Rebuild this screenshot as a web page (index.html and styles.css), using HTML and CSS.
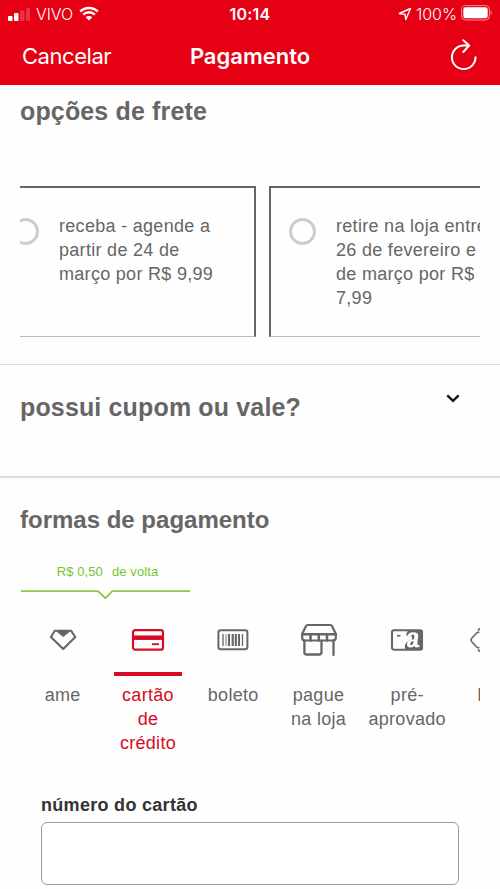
FILE: index.html
```html
<!DOCTYPE html>
<html lang="pt-BR">
<head>
<meta charset="utf-8">
<title>Pagamento</title>
<link rel="stylesheet" href="styles.css">
</head>
<body>
<header class="header">
  <div class="status">
    <div class="status-left">
      <svg class="signal" width="22" height="13" viewBox="0 0 22 13" fill="#fff"><rect x="0" y="8" width="4.500" height="5" rx="1"/><rect x="6" y="5" width="4.500" height="8" rx="1"/><rect x="12" y="2.500" width="4.500" height="10.500" rx="1" opacity=".2"/><rect x="18" y="0" width="4" height="13" rx="1" opacity=".2"/></svg>
      <span class="carrier">VIVO</span>
      <svg class="wifi" width="20" height="15" viewBox="0 0 20 15" fill="none" stroke="#fff" stroke-width="2.500"><path d="M1.200 5.500A12.600 12.600 0 0 1 18.800 5.500M4.200 8.700A8.300 8.300 0 0 1 15.800 8.700"/><path d="M10 14.500 6.700 11.300A4.700 4.700 0 0 1 13.300 11.300Z" fill="#fff" stroke="none"/></svg>
    </div>
    <span class="time">10:14</span>
    <div class="status-right">
      <svg width="14" height="14" viewBox="0 0 14 14" fill="none" stroke="#fff" stroke-width="1.400" stroke-linejoin="round"><path d="M1.300 6.500 12.500 1.500 7.800 12.500 7 7.200Z"/></svg>
      <span class="percent">100%</span>
      <svg class="battery" width="31" height="16" viewBox="0 0 31 16"><rect x=".6" y=".6" width="27.800" height="14.400" rx="4" fill="none" stroke="#fff" stroke-opacity=".55"/><rect x="2.300" y="2.300" width="24.400" height="11" rx="2.300" fill="#fff"/><path d="M29.600 5.500Q31 6.500 31 7.800T29.600 10Z" fill="#fff" opacity=".5"/></svg>
    </div>
  </div>
  <nav class="nav">
    <span class="cancel">Cancelar</span>
    <h1 class="title">Pagamento</h1>
    <svg class="reload" width="28" height="32" viewBox="0 0 28 32" fill="none" stroke="#fff" stroke-width="2" stroke-linecap="round" stroke-linejoin="round"><path d="M25.500 18.300A11.800 11.800 0 1 1 13.700 6.500H19M13.300 1.200 19.200 6.500 13.300 13"/></svg>
  </nav>
</header>
<main>
  <section class="shipping">
    <h2>opções de frete</h2>
    <div class="carousel">
      <div class="option first"><i class="radio"></i><p>receba - agende a<br>partir de 24 de<br>março por R$ 9,99</p></div>
      <div class="option"><i class="radio"></i><p>retire na loja entre<br>26 de fevereiro e<br>de março por R$<br>7,99</p></div>
    </div>
  </section>
  <section class="coupon">
    <h2>possui cupom ou vale?</h2>
    <svg class="chevron" width="14" height="9" viewBox="0 0 14 9" fill="none" stroke="#111" stroke-width="2.400"><path d="M1.300 1.400 7 6.900 12.700 1.400"/></svg>
  </section>
  <section class="payment">
    <h2>formas de pagamento</h2>
    <div class="cashback">
      <p><span>R$ 0,50</span><span>de volta</span></p>
      <svg width="170" height="10" viewBox="0 0 170 10" fill="none" stroke="#84c94a" stroke-width="1.700"><path d="M1 1.200H78L85.300 8.200 92.300 1.200H170"/></svg>
    </div>
    <div class="methods">
      <div class="method">
        <svg width="36" height="36" viewBox="0 0 36 36" fill="none" stroke="#666" stroke-width="2.100" stroke-linejoin="round"><path d="M9.800 8.800H26.200L30.300 15 18.200 27 5.900 15Z"/><path d="M13 9.500H23.500L18.200 13.800Z" fill="#666"/></svg>
        <b class="bar"></b><span>ame</span>
      </div>
      <div class="method active">
        <svg width="36" height="36" viewBox="0 0 36 36" fill="none" stroke="#d70c24" stroke-width="2.200"><rect x="3" y="8.200" width="30" height="19.500" rx="2.300"/><path d="M3 15.700H33" stroke-width="4.500"/><path d="M22 22.200H29" stroke-width="1.900"/></svg>
        <b class="bar"></b><span>cartão<br>de<br>crédito</span>
      </div>
      <div class="method">
        <svg width="36" height="36" viewBox="0 0 36 36" fill="none" stroke="#666" stroke-width="2"><rect x="3.400" y="8.200" width="29" height="19" rx="2.300"/><path d="M8 12V24M27.500 12V24" stroke-width="1.300"/><path d="M11 12V24" stroke-width=".9"/><path d="M14 12V24M17.700 12V24M20.800 12V24M24 12V24" stroke-width="2.100"/></svg>
        <b class="bar"></b><span>boleto</span>
      </div>
      <div class="method">
        <svg width="38" height="38" viewBox="0 0 38 38" fill="none" stroke="#666" stroke-width="2.200" stroke-linejoin="round" stroke-linecap="round"><path d="M7.500 4H30.500Q31.500 4 32 5L35.800 13V17Q35.800 19.500 33 19.500H5Q2.200 19.500 2.200 17V13L6 5Q6.500 4 7.500 4Z"/><path d="M2.200 13.200H35.800M10.500 13.200V19.500M18.800 13.200V19.500M27 13.200V19.500" stroke-width="2.500"/><path d="M4.400 19.500V31.500Q4.400 33.500 6.500 33.500H19.200Q21.500 33.500 21.500 31.200V20M33.500 19.500V34" stroke-width="2.300"/></svg>
        <b class="bar"></b><span>pague<br>na loja</span>
      </div>
      <div class="method wide">
        <svg width="36" height="36" viewBox="0 0 36 36" fill="none" stroke="#666"><rect x="3" y="8.200" width="30" height="19.500" rx="2" stroke-width="2.100"/><path d="M20 8H32Q34 8 34 10V26Q34 28 32 28H17Q14.500 25 17 21Q19 18.500 23 17.500V14.500H18.500L17 13Q17.300 10 20 8Z" fill="#666" stroke="none"/><path d="M18 14.800Q19 10.300 24 10.300Q29.600 10.300 29.200 14L28.300 21.800Q28.200 23.300 30.500 23V24.800Q26.500 26.500 25.300 23.900Q23.300 25.700 21 25.500Q17.800 25.200 18 22Q18.300 17.600 25 17.200L25.400 14.300Q25.500 12.500 23.900 12.600Q22.300 12.700 22 14.800ZM24.600 19Q21.300 19.500 21.300 22Q21.400 23.400 22.500 23.200Q24.300 22.800 24.600 19Z" fill="#fff" fill-rule="evenodd" stroke="none"/><path d="M8 13.700H11.500" stroke-width="1.600"/></svg>
        <b class="bar"></b><span>pré-<br>aprovado</span>
      </div>
      <div class="method last">
        <svg width="44" height="36" viewBox="0 0 44 36" fill="none" stroke="#666" stroke-width="1.600"><path d="M9.500 10.300H8.300Q7.500 10.300 7 10.800L1.800 16.300Q.5 18 1.800 19.700L7 25.200Q7.500 25.700 8.300 25.700H9.500M7.800 8.500 10.500 6.200M7.800 27.500 10.500 29.800"/></svg>
        <b class="bar"></b><span>PIX</span>
      </div>
    </div>
    <div class="field">
      <label for="card">número do cartão</label>
      <input id="card" type="text">
    </div>
  </section>
</main>
</body>
</html>
```
FILE: styles.css
```css
* { box-sizing: border-box; }
body { margin: 0; height: 889px; overflow: hidden; background: #fefefe; color: #666; font: 18px/24px "Liberation Sans", Arial, sans-serif; }
h1, h2, p { margin: 0; }
svg { display: block; flex: none; }
.header { height: 85px; background: #e60014; color: #fff; font-family: Inter, sans-serif; }
.status { height: 28px; display: grid; grid-template-columns: 1fr auto 1fr; align-items: center; padding: 0 8px; font-size: 16px; }
.status-left, .status-right { display: flex; align-items: center; }
.status-right { justify-content: flex-end; }
.carrier { margin: 0 6px; font-weight: 350; letter-spacing: -.1px; }
.wifi { margin-top: -2px; }
.time { font-weight: 600; letter-spacing: .2px; }
.percent { margin: 0 4px; font-weight: 350; }
.battery { margin: -2px 0 0; }
.nav { height: 57px; display: grid; grid-template-columns: 1fr auto 1fr; align-items: center; padding: 0 22px; font-size: 22px; }
.cancel { font-weight: 400; letter-spacing: -.45px; margin-top: -2px; }
.title { font-size: 22px; font-weight: 600; margin-top: -2px; }
.reload { justify-self: end; margin-top: -4px; }
h2 { font-size: 25px; line-height: 30px; font-weight: 700; letter-spacing: .15px; }
.shipping { height: 280px; padding: 11px 20px 0; border-bottom: 1px solid #ddd; }
.carousel { margin-top: 60px; height: 151px; display: flex; gap: 13px; overflow: hidden; }
.option { flex: none; width: 244px; display: flex; padding: 26px 0 0 18px; border: 2px solid #666; border-bottom: 1px solid #bbb; }
.option.first { margin-left: -8px; padding-left: 0; border-left: 0; }
.option p { white-space: nowrap; letter-spacing: .3px; }
.radio { flex: none; width: 27px; height: 27px; margin: 4px 20px 0 0; border: 3px solid #ccc; border-radius: 50%; }
.coupon { height: 113px; padding: 27px 40px 0 20px; display: flex; justify-content: space-between; border-bottom: 2px solid #ddd; }
.chevron { margin-top: 2px; }
.payment { padding: 27px 20px 0; }
.payment h2 { font-size: 24px; letter-spacing: 0; }
.cashback { width: 170px; margin-top: 27px; color: #76c52b; }
.cashback p { display: flex; justify-content: center; gap: 9px; padding-left: 5px; height: 28px; font-size: 13px; line-height: 20px; letter-spacing: .1px; }
.methods { display: flex; margin-top: 21px; height: 136px; overflow: hidden; }
.method { flex: none; width: 85.3px; display: flex; flex-direction: column; align-items: center; text-align: center; letter-spacing: .3px; }
.method svg { height: 38px; }
.method.wide { width: 92px; }
.method.last { width: 78px; }
.bar { width: 68px; height: 4px; margin: 13px 0 7px; }
.active { color: #d70c24; }
.active .bar { background: #d70c24; }
.field { padding: 0 21px; margin-top: 35px; }
.field label { display: block; color: #333; font-weight: 700; line-height: 26px; letter-spacing: .3px; }
.field input { display: block; width: 418px; height: 63px; margin-top: 4px; border: 1px solid #999; border-radius: 6px; background: #fff; }
```
